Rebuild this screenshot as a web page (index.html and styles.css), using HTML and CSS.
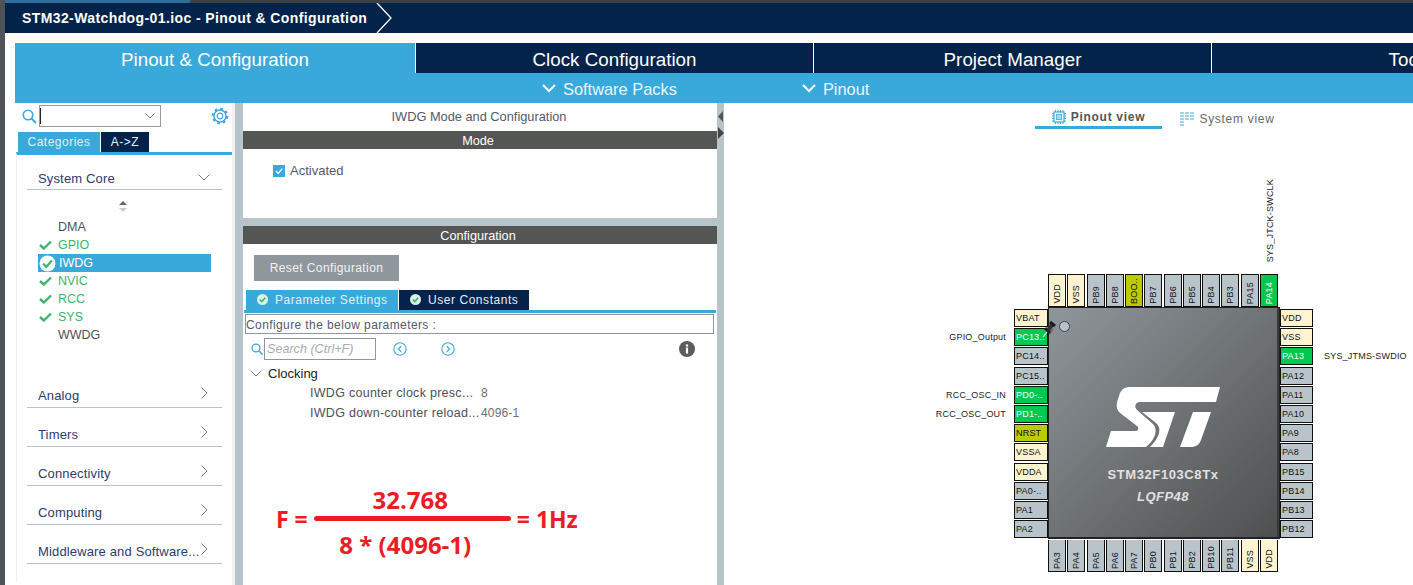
FILE: index.html
```html
<!DOCTYPE html>
<html lang="en">
<head>
	<meta charset="UTF-8">
	<title>STM32-Watchdog-01.ioc - Pinout &amp; Configuration</title>
	<link rel="stylesheet" href="styles.css">
</head>
<body>
	<div class="app">
		<div class="strip"></div>
		<div class="main">
			<div class="topline"></div>
			<div class="titlebar">
				<span class="title">STM32-Watchdog-01.ioc - Pinout &amp; Configuration</span>
				<svg class="crumb" width="16" height="30" viewBox="0 0 16 30"><path d="M1 0 L15 15 L1 30" fill="none" stroke="#fff" stroke-width="1.3"/></svg>
			</div>
			<div class="tabs">
				<div class="tab on">Pinout &amp; Configuration</div>
				<div class="tab">Clock Configuration</div>
				<div class="tab">Project Manager</div>
				<div class="tab">Tools</div>
			</div>
			<div class="subbar">
				<div class="sub sub1"><svg width="14" height="9" viewBox="0 0 14 9"><path d="M1 1 L7 7 L13 1" fill="none" stroke="#fff" stroke-width="2"/></svg>Software Packs</div>
				<div class="sub sub2"><svg width="14" height="9" viewBox="0 0 14 9"><path d="M1 1 L7 7 L13 1" fill="none" stroke="#fff" stroke-width="2"/></svg>Pinout</div>
			</div>
			<div class="work">
				<div class="side">
					<div class="searchrow">
						<svg class="lens" width="15" height="15" viewBox="0 0 15 15"><circle cx="6" cy="6" r="4.7" fill="none" stroke="#39a9dc" stroke-width="1.6"/><path d="M9.5 9.5 L14 14" stroke="#39a9dc" stroke-width="1.8"/></svg>
						<div class="combo"><i class="caret"></i><svg width="10" height="6" viewBox="0 0 10 6"><path d="M0.5 0.5 L5 5 L9.5 0.5" fill="none" stroke="#777" stroke-width="1"/></svg></div>
						<svg class="gear" width="18" height="18" viewBox="0 0 18 18"><circle cx="9" cy="9" r="2.8" fill="none" stroke="#39a9dc" stroke-width="1.2"/><circle cx="9" cy="9" r="6" fill="none" stroke="#39a9dc" stroke-width="1.4"/><circle cx="9" cy="9" r="7.3" fill="none" stroke="#39a9dc" stroke-width="2" stroke-dasharray="2.6 3.13"/></svg>
					</div>
					<div class="sidetabs">
						<div class="stab on">Categories</div>
						<div class="stab">A-&gt;Z</div>
					</div>
					<div class="cats">
						<div class="cat first">System Core<svg width="12" height="7" viewBox="0 0 12 7"><path d="M0.5 0.5 L6 6 L11.5 0.5" fill="none" stroke="#777"/></svg></div>
						<svg class="updown" width="8" height="11" viewBox="0 0 8 11"><path d="M4 0 L8 4 L0 4 Z" fill="#666"/><path d="M4 11 L8 7 L0 7 Z" fill="#ccc"/></svg>
						<ul class="items">
							<li>DMA</li>
							<li class="ok"><svg width="13" height="10" viewBox="0 0 13 10"><path d="M1 5 L4.8 8.5 L12 1.5" fill="none" stroke="#3cb371" stroke-width="2.4"/></svg>GPIO</li>
							<li class="sel"><svg width="17" height="17" viewBox="0 0 17 17"><circle cx="8.5" cy="8.5" r="8" fill="#fff"/><path d="M4 8.5 L7.3 11.8 L13 5.5" fill="none" stroke="#3cb371" stroke-width="2.2"/></svg>IWDG</li>
							<li class="ok"><svg width="13" height="10" viewBox="0 0 13 10"><path d="M1 5 L4.8 8.5 L12 1.5" fill="none" stroke="#3cb371" stroke-width="2.4"/></svg>NVIC</li>
							<li class="ok"><svg width="13" height="10" viewBox="0 0 13 10"><path d="M1 5 L4.8 8.5 L12 1.5" fill="none" stroke="#3cb371" stroke-width="2.4"/></svg>RCC</li>
							<li class="ok"><svg width="13" height="10" viewBox="0 0 13 10"><path d="M1 5 L4.8 8.5 L12 1.5" fill="none" stroke="#3cb371" stroke-width="2.4"/></svg>SYS</li>
							<li>WWDG</li>
						</ul>
						<div class="cat">Analog<svg width="7" height="12" viewBox="0 0 7 12"><path d="M0.5 0.5 L6 6 L0.5 11.5" fill="none" stroke="#777"/></svg></div>
						<div class="cat">Timers<svg width="7" height="12" viewBox="0 0 7 12"><path d="M0.5 0.5 L6 6 L0.5 11.5" fill="none" stroke="#777"/></svg></div>
						<div class="cat">Connectivity<svg width="7" height="12" viewBox="0 0 7 12"><path d="M0.5 0.5 L6 6 L0.5 11.5" fill="none" stroke="#777"/></svg></div>
						<div class="cat">Computing<svg width="7" height="12" viewBox="0 0 7 12"><path d="M0.5 0.5 L6 6 L0.5 11.5" fill="none" stroke="#777"/></svg></div>
						<div class="cat">Middleware and Software...<svg width="7" height="12" viewBox="0 0 7 12"><path d="M0.5 0.5 L6 6 L0.5 11.5" fill="none" stroke="#777"/></svg></div>
					</div>
				</div>
				<div class="mid">
					<div class="midtitle">IWDG Mode and Configuration</div>
					<div class="bar">Mode</div>
					<div class="modebox">
						<label class="check"><svg width="12" height="12" viewBox="0 0 12 12"><rect width="12" height="12" fill="#39a9dc"/><path d="M3 6 L5.2 8.4 L9.3 3.6" fill="none" stroke="#fff" stroke-width="1.3"/></svg>Activated</label>
					</div>
					<div class="bar">Configuration</div>
					<div class="confbox">
						<div class="resetbtn">Reset Configuration</div>
						<div class="conftabs">
							<div class="ctab on"><svg width="11" height="11" viewBox="0 0 11 11"><circle cx="5.5" cy="5.5" r="5.5" fill="#d9f2e3"/><path d="M2.8 5.5 L4.8 7.5 L8.2 3.8" fill="none" stroke="#3cb371" stroke-width="1.6"/></svg>Parameter Settings</div>
							<div class="ctab"><svg width="11" height="11" viewBox="0 0 11 11"><circle cx="5.5" cy="5.5" r="5.5" fill="#d9f2e3"/><path d="M2.8 5.5 L4.8 7.5 L8.2 3.8" fill="none" stroke="#3cb371" stroke-width="1.6"/></svg>User Constants</div>
						</div>
						<div class="describe">Configure the below parameters :</div>
						<div class="paramtools">
							<svg width="12" height="12" viewBox="0 0 12 12"><circle cx="5" cy="5" r="3.9" fill="none" stroke="#39a9dc" stroke-width="1.4"/><path d="M7.8 7.8 L11.5 11.5" stroke="#39a9dc" stroke-width="1.5"/></svg>
							<div class="psearch">Search (Ctrl+F)</div>
							<svg class="nav1" width="14" height="14" viewBox="0 0 14 14"><circle cx="7" cy="7" r="6.2" fill="none" stroke="#39a9dc" stroke-width="1.1"/><path d="M8.2 4.2 L5.4 7 L8.2 9.8" fill="none" stroke="#39a9dc" stroke-width="1.2"/></svg>
							<svg class="nav2" width="14" height="14" viewBox="0 0 14 14"><circle cx="7" cy="7" r="6.2" fill="none" stroke="#39a9dc" stroke-width="1.1"/><path d="M5.8 4.2 L8.6 7 L5.8 9.8" fill="none" stroke="#39a9dc" stroke-width="1.2"/></svg>
							<svg class="info" width="16" height="16" viewBox="0 0 16 16"><circle cx="8" cy="8" r="8" fill="#5c5c5c"/><rect x="6.9" y="6.6" width="2.2" height="6" fill="#fff"/><rect x="6.9" y="3.4" width="2.2" height="2.2" fill="#fff"/></svg>
						</div>
						<div class="group"><svg width="12" height="7" viewBox="0 0 12 7"><path d="M0.5 0.5 L6 6 L11.5 0.5" fill="none" stroke="#777"/></svg>Clocking</div>
						<div class="param"><span>IWDG counter clock presc...</span><span class="val">8</span></div>
						<div class="param"><span>IWDG down-counter reload...</span><span class="val">4096-1</span></div>
						<div class="formula">
							<span class="side-term">F =</span>
							<div class="fraction">
								<span class="num">32.768</span>
								<i class="rule"></i>
								<span class="den">8 * (4096-1)</span>
							</div>
							<span class="side-term">= 1Hz</span>
						</div>
					</div>
				</div>
				<div class="split">
					<svg width="6" height="34" viewBox="0 0 6 34"><path d="M5 3 L5 14 L0 8.5 Z" fill="#555"/><path d="M0 19 L6 25 L0 31 Z" fill="#444"/></svg>
				</div>
				<div class="pinout">
					<div class="views">
						<div class="view on">
							<svg width="14" height="14" viewBox="0 0 14 14"><rect x="2" y="2" width="10" height="10" fill="none" stroke="#39a9dc" stroke-width="1.2"/><rect x="4.3" y="4.3" width="5.4" height="5.4" fill="#a9daf1" stroke="#39a9dc" stroke-width=".8"/><path d="M3.5 0 V2 M6 0 V2 M8.5 0 V2 M11 0 V2 M3.5 12 V14 M6 12 V14 M8.5 12 V14 M11 12 V14 M0 3.5 H2 M0 6 H2 M0 8.5 H2 M0 11 H2 M12 3.5 H14 M12 6 H14 M12 8.5 H14 M12 11 H14" stroke="#39a9dc"/></svg>
							Pinout view
						</div>
						<div class="view">
							<svg width="14" height="14" viewBox="0 0 14 14"><path d="M0 1 H4 M0 4 H4 M0 7 H4 M0 10 H4 M0 13 H4 M5 1 H9 M5 4 H9 M5 7 H9 M10 1 H14 M10 4 H14 M10 7 H14" stroke="#39a9dc" stroke-width="1.2"/></svg>
							System view
						</div>
					</div>
					<div class="package">
						<div class="pins row toprow">
							<div class="pin pw"><span>VDD</span></div>
							<div class="pin pw"><span>VSS</span></div>
							<div class="pin"><span>PB9</span></div>
							<div class="pin"><span>PB8</span></div>
							<div class="pin ol"><span>BOO..</span></div>
							<div class="pin"><span>PB7</span></div>
							<div class="pin"><span>PB6</span></div>
							<div class="pin"><span>PB5</span></div>
							<div class="pin"><span>PB4</span></div>
							<div class="pin"><span>PB3</span></div>
							<div class="pin"><span>PA15</span></div>
							<div class="pin gr"><span>PA14</span><em class="sig sigtop">SYS_JTCK-SWCLK</em></div>
						</div>
						<div class="pins col leftcol">
							<div class="pin pw"><span>VBAT</span></div>
							<div class="pin gr"><span>PC13..</span><em class="sig sigleft">GPIO_Output</em></div>
							<div class="pin"><span>PC14..</span></div>
							<div class="pin"><span>PC15..</span></div>
							<div class="pin gr"><span>PD0-..</span><em class="sig sigleft">RCC_OSC_IN</em></div>
							<div class="pin gr"><span>PD1-..</span><em class="sig sigleft">RCC_OSC_OUT</em></div>
							<div class="pin ol"><span>NRST</span></div>
							<div class="pin pw"><span>VSSA</span></div>
							<div class="pin pw"><span>VDDA</span></div>
							<div class="pin"><span>PA0-..</span></div>
							<div class="pin"><span>PA1</span></div>
							<div class="pin"><span>PA2</span></div>
						</div>
						<div class="chip">
							<i class="dot"></i>
							<svg class="tack" width="18" height="18" viewBox="0 0 18 18"><path d="M3 17 L8 11" stroke="#ddd" stroke-width="1.2"/><path d="M7 15 L13 9" stroke="#000" stroke-opacity=".2" stroke-width="3"/><path d="M5 8 L10 13" stroke="#222" stroke-width="3"/><path d="M8 10 L12 5" stroke="#333" stroke-width="4"/><path d="M10 2 L15 6" stroke="#1d1d1d" stroke-width="3"/></svg>
							<svg class="logo" width="114" height="60" viewBox="0 0 114 60"><path d="M114 0 L110 15 L34 15 C29 15 28 20 31 23 L47 37 C52 42 50 52 40 60 L0 60 L5 44 L29 44 C33 44 33 41 31 39 L14 26 C10 22 10 18 12 12 L14 6 C16 2 19 0 24 0 Z" fill="#fff"/><path d="M36 25 L69 25 L57 60 L44 60 C54 50 56 41 50 36 Z" fill="#fff"/><path d="M87 25 L105 25 L95 53 C93 58 90 60 85 60 L74 60 Z" fill="#fff"/></svg>
							<div class="partno">STM32F103C8Tx</div>
							<div class="pkgname">LQFP48</div>
						</div>
						<div class="pins col rightcol">
							<div class="pin pw"><span>VDD</span></div>
							<div class="pin pw"><span>VSS</span></div>
							<div class="pin gr"><span>PA13</span><em class="sig sigright">SYS_JTMS-SWDIO</em></div>
							<div class="pin"><span>PA12</span></div>
							<div class="pin"><span>PA11</span></div>
							<div class="pin"><span>PA10</span></div>
							<div class="pin"><span>PA9</span></div>
							<div class="pin"><span>PA8</span></div>
							<div class="pin"><span>PB15</span></div>
							<div class="pin"><span>PB14</span></div>
							<div class="pin"><span>PB13</span></div>
							<div class="pin"><span>PB12</span></div>
						</div>
						<div class="pins row bottomrow">
							<div class="pin"><span>PA3</span></div>
							<div class="pin"><span>PA4</span></div>
							<div class="pin"><span>PA5</span></div>
							<div class="pin"><span>PA6</span></div>
							<div class="pin"><span>PA7</span></div>
							<div class="pin"><span>PB0</span></div>
							<div class="pin"><span>PB1</span></div>
							<div class="pin"><span>PB2</span></div>
							<div class="pin"><span>PB10</span></div>
							<div class="pin"><span>PB11</span></div>
							<div class="pin pw"><span>VSS</span></div>
							<div class="pin pw"><span>VDD</span></div>
						</div>
					</div>
				</div>
			</div>
		</div>
	</div>
</body>
</html>
```

FILE: styles.css
```css
*{
	box-sizing: border-box;
}
html,body{
	margin: 0;
	height: 100%;
	overflow: hidden;
	background: #fff;
	font-family: "Liberation Sans", Arial, sans-serif;
}
.app{
	display: flex;
	width: 1413px;
	height: 585px;
	overflow: hidden;
}
.strip{
	width: 5px;
	background: #4d5357;
}
.main{
	width: 1408px;
	display: flex;
	flex-direction: column;
}
.topline{
	height: 3px;
	background: linear-gradient(90deg,#2f6d9c 185px,#3c4043 185px);
}
.titlebar{
	height: 30px;
	background: #03234b;
	display: flex;
	align-items: center;
	padding-left: 17px;
	color: #fff;
}
.title{
	font-size: 14px;
	font-weight: bold;
	letter-spacing: .4px;
}
.crumb{
	margin-left: 9px;
}
.tabs{
	display: flex;
	margin: 10px 0 0 10px;
	height: 30px;
}
.tab{
	flex: none;
	width: 398px;
	background: #03234b;
	border-left: 1px solid #fff;
	color: #fff;
	font-size: 18.8px;
	line-height: 33px;
	text-align: center;
}
.tab.on{
	width: 400px;
	background: #39a9dc;
	border-left: 0;
}
.subbar{
	height: 30px;
	margin-left: 10px;
	background: #39a9dc;
	display: flex;
	color: #e9f6fc;
	font-size: 16.4px;
	line-height: 33px;
}
.sub svg{
	margin-right: 7px;
	vertical-align: 2px;
}
.sub1{
	margin-left: 527px;
}
.sub2{
	margin-left: 125px;
}
.work{
	height: 482px;
	display: flex;
	padding-left: 10px;
}

/* left panel */
.side{
	width: 220px;
	flex: none;
	border-right: 3px solid #f2f2f2;
}
.searchrow{
	display: flex;
	align-items: center;
	height: 24px;
	padding: 2px 0 0 7px;
}
.combo{
	width: 122px;
	height: 22px;
	margin-left: 2px;
	border: 1px solid #999;
	display: flex;
	align-items: center;
	justify-content: space-between;
	padding: 0 5px 0 0;
}
.caret{
	width: 1px;
	height: 16px;
	background: #222;
}
.gear{
	margin-left: 50px;
}
.sidetabs{
	display: flex;
	margin: 5px 0 0 3px;
	height: 20px;
	gap: 1px;
	font-size: 12px;
	letter-spacing: .5px;
	color: #dff1fa;
	line-height: 20px;
	text-align: center;
}
.stab{
	width: 48px;
	background: #03234b;
}
.stab.on{
	width: 82px;
	background: #39a9dc;
}
.cats{
	border-top: 3px solid #39a9dc;
	border-left: 1px solid #f0f0f0;
	margin-left: 1px;
	height: 430px;
	padding: 0 0 0 10px;
}
.cat{
	width: 195px;
	height: 39px;
	border-bottom: 1px solid #b9c4ca;
	display: flex;
	align-items: flex-end;
	justify-content: space-between;
	padding: 0 14px 3px 11px;
	color: #2f3a6c;
	font-size: 13px;
	line-height: 16px;
	letter-spacing: .15px;
}
.cat svg{
	margin-bottom: 5px;
	flex: none;
}
.cat.first{
	height: 35px;
	padding-right: 12px;
	padding-bottom: 2px;
}
.cat.first svg{
	margin-bottom: 6px;
}
.updown{
	display: block;
	margin: 11px 0 0 92px;
}
.items{
	list-style: none;
	margin: 6px 0 0;
	padding: 0 0 0 11px;
	height: 151px;
	font-size: 12.5px;
	line-height: 18px;
	color: #4d5157;
}
.items li{
	position: relative;
	width: 173px;
	height: 18px;
	padding-left: 20px;
}
.items li svg{
	position: absolute;
	left: 1px;
	top: 4px;
}
.items .ok{
	color: #3cb371;
}
.items .sel{
	background: #39a9dc;
	color: #fff;
	padding-left: 21px;
}
.items .sel svg{
	top: 1px;
}

/* middle panel */
.mid{
	width: 482px;
	flex: none;
	border-left: 8px solid #b9c4ca;
	display: flex;
	flex-direction: column;
}
.midtitle{
	height: 28px;
	line-height: 28px;
	text-align: center;
	font-size: 12.8px;
	color: #55596b;
	padding-right: 2px;
}
.bar{
	height: 18px;
	line-height: 21px;
	background: #545654;
	color: #fff;
	font-size: 12.7px;
	text-align: center;
	flex: none;
	padding-right: 4px;
}
.modebox{
	height: 77px;
	border-bottom: 8px solid #b9c4ca;
	padding: 14px 0 0 30px;
	flex: none;
}
.check{
	display: flex;
	align-items: center;
	gap: 5px;
	font-size: 13px;
	color: #55596b;
}
.confbox{
	flex: 1;
	position: relative;
}
.resetbtn{
	width: 145px;
	height: 26px;
	margin: 11px 0 0 11px;
	background: #8f969c;
	color: #f2f2f2;
	font-size: 12px;
	letter-spacing: .4px;
	line-height: 27px;
	text-align: center;
}
.conftabs{
	display: flex;
	margin: 9px 1px 0 1px;
	padding-left: 2px;
	gap: 1px;
	height: 23px;
	border-bottom: 3px solid #39a9dc;
}
.ctab{
	width: 130px;
	background: #03234b;
	color: #e6eef4;
	font-size: 12px;
	letter-spacing: .55px;
	line-height: 20px;
	padding-left: 11px;
}
.ctab.on{
	width: 152px;
	background: #39a9dc;
}
.ctab svg{
	margin-right: 7px;
	vertical-align: -1px;
}
.describe{
	height: 20px;
	margin: 1px 3px 0 2px;
	border: 1px solid #8f969c;
	font-size: 12px;
	letter-spacing: .4px;
	line-height: 20px;
	color: #55596b;
	padding-left: 0;
}
.paramtools{
	position: relative;
	display: flex;
	align-items: center;
	height: 22px;
	margin-top: 4px;
	padding-left: 8px;
	gap: 1px;
}
.psearch{
	width: 112px;
	height: 22px;
	border: 1px solid #8f969c;
	font-size: 12.6px;
	font-style: italic;
	line-height: 21px;
	padding-left: 2px;
	color: #aaa;
}
.nav1,.nav2,.info{
	position: absolute;
	top: 4px;
}
.nav1{
	left: 150px;
}
.nav2{
	left: 198px;
}
.info{
	left: 436px;
	top: 3px;
}
.group{
	display: flex;
	align-items: center;
	gap: 6px;
	margin: 4px 0 0 7px;
	height: 18px;
	font-size: 13px;
	color: #222;
}
.param{
	display: flex;
	height: 20px;
	margin-left: 67px;
	font-size: 12.5px;
	line-height: 23px;
	letter-spacing: .28px;
	color: #4d5157;
}
.param span:first-child{
	width: 171px;
	white-space: nowrap;
}
.val{
	color: #6a6f75;
	font-size: 12px;
	letter-spacing: .15px;
}
/* red note drawn over the screenshot */
.formula{
	position: absolute;
	left: 33px;
	top: 236px;
	display: flex;
	align-items: center;
	gap: 6px;
	color: #ed1c24;
	font-family: "Open Sans", sans-serif;
	font-weight: bold;
	font-size: 24px;
	line-height: 30px;
}
.side-term{
	font-size: 23px;
}
.fraction{
	width: 197px;
	display: flex;
	flex-direction: column;
	align-items: center;
}
.rule{
	width: 197px;
	height: 5px;
	border-radius: 3px;
	background: #ed1c24;
}
.num{
	height: 36px;
	line-height: 39px;
	margin-right: 4px;
}
.den{
	height: 36px;
	line-height: 47px;
	margin-right: 14px;
}
.split{
	width: 7px;
	flex: none;
	background: #b9c4ca;
	padding: 5px 0 0 1px;
}
.split svg{
	display: block;
}

/* pinout */
.pinout{
	flex: 1;
	min-width: 0;
}
.views{
	display: flex;
	height: 26px;
	padding-left: 311px;
	font-size: 12px;
	letter-spacing: .7px;
	color: #6a6a6a;
}
.view{
	display: flex;
	align-items: center;
	justify-content: center;
	gap: 5px;
	width: 127px;
	height: 26px;
	padding-top: 5px;
}
.view.on{
	font-weight: bold;
	color: #555;
	border-bottom: 3px solid #39a9dc;
	margin-right: 2px;
}
.package{
	display: grid;
	grid-template-columns: 34px 232px 33px;
	grid-template-rows: 33px 232px 33px;
	margin: 145px 0 0 290px;
	width: 299px;
}
.pins{
	display: flex;
	gap: 1.2px;
}
.row{
	padding: 0 2px 0 0;
}
.toprow{
	grid-column: 2;
	grid-row: 1;
}
.bottomrow{
	grid-column: 2;
	grid-row: 3;
}
.col{
	flex-direction: column;
	padding: 2px 0 .8px;
}
.leftcol{
	grid-column: 1;
	grid-row: 2;
}
.rightcol{
	grid-column: 3;
	grid-row: 2;
}
.pin{
	flex: 1;
	position: relative;
	display: flex;
	align-items: center;
	background: #b9c4ca;
	border: 1px solid #111;
	color: #111;
	font-size: 9px;
	letter-spacing: .2px;
	padding-left: 1px;
	white-space: nowrap;
}
.row .pin{
	align-items: flex-end;
	justify-content: center;
	padding: 0 0 2px;
}
.row .pin span{
	writing-mode: vertical-rl;
	transform: rotate(180deg);
}
.bottomrow .pin{
	border-top: 0;
	margin-top: 1px;
}
.pw{
	background: #fff4cf;
}
.gr{
	background: #00c850;
	color: #fff;
}
.ol{
	background: #bccb00;
}
.sig{
	position: absolute;
	font-style: normal;
	font-size: 9px;
	letter-spacing: .2px;
	color: #222;
}
.sigleft{
	right: 41px;
}
.sigright{
	left: 43px;
}
.sigtop{
	bottom: 44px;
	left: 4px;
	writing-mode: vertical-rl;
	transform: rotate(180deg);
}
.chip{
	grid-column: 2;
	grid-row: 2;
	position: relative;
	background: linear-gradient(135deg,#8f969b,#4e5050);
	border-top: 1px solid #eee;
	border-left: 1px solid #ccc;
	outline: 1px solid #222;
	outline-offset: -1px;
	border-right: 3px solid #3a3a3a;
	border-bottom: 2px solid #222;
	text-align: center;
	color: #e0e0e0;
}
.dot{
	position: absolute;
	left: 10px;
	top: 13px;
	width: 11px;
	height: 11px;
	border-radius: 50%;
	background: #b9c4ca;
	border: 1px solid #444;
}
.tack{
	position: absolute;
	left: -9px;
	top: 12px;
}
.logo{
	position: absolute;
	left: 57px;
	top: 79px;
}
.partno{
	position: absolute;
	left: 0;
	right: 0;
	top: 159px;
	font-size: 13px;
	font-weight: bold;
	letter-spacing: .6px;
}
.pkgname{
	position: absolute;
	left: 0;
	right: 0;
	top: 181px;
	font-size: 13px;
	font-style: italic;
	font-weight: bold;
	letter-spacing: .5px;
}
```
